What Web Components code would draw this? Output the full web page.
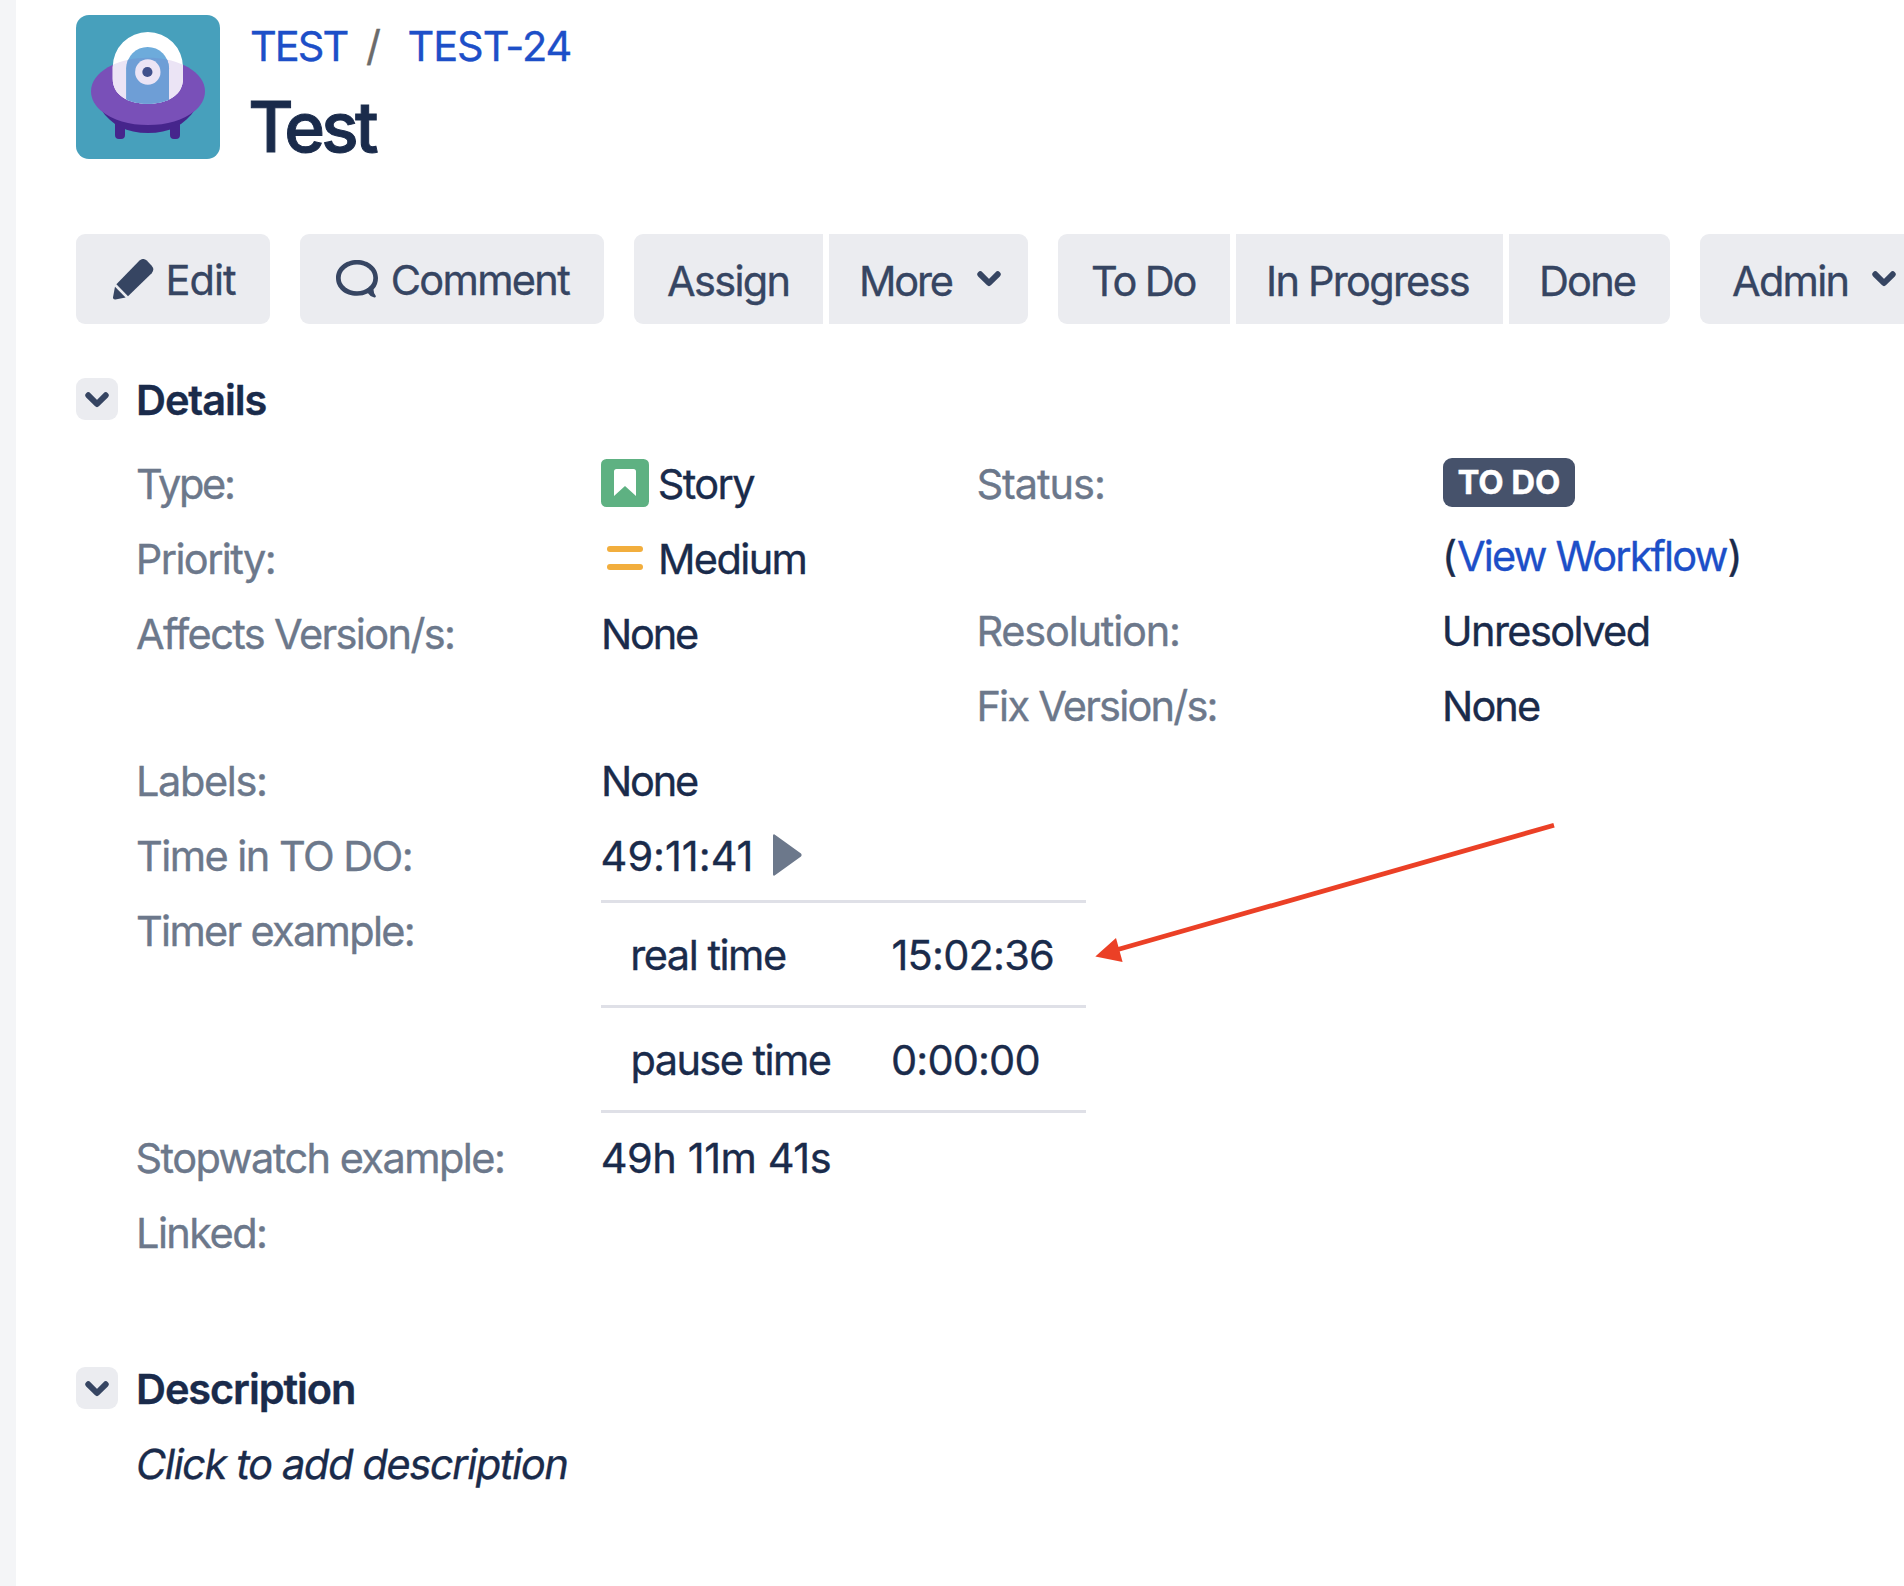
<!DOCTYPE html>
<html lang="en">
<head>
<meta charset="utf-8">
<title>TEST-24 Test</title>
<style>
html,body{margin:0;padding:0;background:#fff}
body{width:1904px;height:1586px;overflow:hidden;font-family:Inter,"Liberation Sans",sans-serif;font-size:41.5px;line-height:60px;-webkit-text-stroke:.35px currentColor;color:#1a2b4b}
</style>
</head>
<body>
<issue-page></issue-page>
<script>
const define = (name, html, ready) => {
  const t = document.createElement('template');
  t.innerHTML = html;
  customElements.define(name, class extends HTMLElement {
    constructor() { super(); this.attachShadow({mode: 'open'}).append(t.content.cloneNode(true)); }
    connectedCallback() { if (ready) ready.call(this, this.shadowRoot); }
  });
};

// Text run; ink="left width" places and tracks the visible glyphs.
const ctx = document.createElement('canvas').getContext('2d');
define('ui-run', `<style>:host{display:inline-block;white-space:nowrap;flex:none;-webkit-text-stroke-color:currentColor}:host([link]){color:#1d4fc8}</style><slot></slot>`, function () {
  const [left, width] = this.getAttribute('ink').split(' ').map(Number);
  const s = getComputedStyle(this);
  ctx.font = `${s.fontStyle} ${s.fontWeight} ${s.fontSize} ${s.fontFamily}`;
  const text = this.textContent, m = ctx.measureText(text);
  const ls = text.length > 1 ? (width - m.actualBoundingBoxLeft - m.actualBoundingBoxRight) / (text.length - 1) : 0;
  this.style.letterSpacing = ls.toFixed(3) + 'px';
  this.style.marginLeft = (left + m.actualBoundingBoxLeft).toFixed(2) + 'px';
  this.style.marginRight = (m.actualBoundingBoxRight - m.width - ls).toFixed(2) + 'px';
});

define('project-avatar', `<style>:host{display:block;width:144px;height:144px;flex:none}svg{display:block}</style>
<svg width="144" height="144" viewBox="0 0 144 144">
<defs><clipPath id="s"><path d="M15 76.300C15 57 41 42.700 72 42.700S129 57 129 76.300C129 84.500 124.500 91 119.300 95.500C107 105.500 91 110 72 110S37 105.500 24.700 95.500C19.500 91 15 84.500 15 76.300Z"/></clipPath>
<clipPath id="d"><path d="M36.700 52.200a35.150 35.150 0 0 1 70.300 0v11.500c0 15.500-14 25-35.150 25s-35.150-9.500-35.150-25z"/></clipPath></defs>
<rect width="144" height="144" rx="13" fill="#47a0bc"/>
<path d="M24.700 94C35 110 51 118 72 118s37-8 47.300-24z" fill="#46258c"/>
<path d="M39 106h10v14a4 4 0 0 1-4 4h-2a4 4 0 0 1-4-4zM94 106h10v14a4 4 0 0 1-4 4h-2a4 4 0 0 1-4-4z" fill="#46258c"/>
<g clip-path="url(#s)"><rect width="144" height="144" fill="#7950b8"/></g>
<g clip-path="url(#d)"><rect width="144" height="144" fill="#fff"/><g clip-path="url(#s)"><rect width="144" height="144" fill="#ebe4f5"/></g>
<path d="M50.300 100V53.300a21.350 21.350 0 0 1 42.700 0V100z" fill="#6dabdb"/>
<g clip-path="url(#s)"><path d="M50.300 100V53.300a21.350 21.350 0 0 1 42.700 0V100z" fill="#6e9ed6"/></g></g>
<circle cx="71.800" cy="57" r="12.700" fill="#ebe4f5"/><circle cx="71.400" cy="57" r="5.100" fill="#40508c"/>
</svg>`);

define('icon-chevron', `<style>:host{display:block;width:24px;height:16px;flex:none}svg{display:block}</style>
<svg width="24" height="16" viewBox="0 0 24 16"><path d="M3.300 3.300L12 12L20.700 3.300" fill="none" stroke="#364562" stroke-width="6" stroke-linecap="round" stroke-linejoin="round"/></svg>`);

define('icon-pencil', `<style>:host{display:block;width:41px;height:41px;flex:none}svg{display:block}</style>
<svg width="41" height="41" viewBox="0 0 41 41" fill="#364562"><path d="M26.500 1.500Q30.200-1.600 33.800 1.600L38.500 6.500Q42 10.500 38.700 14.200L15 37.200L3.400 25.200Z"/><path d="M2 27.800L12.600 38.600L2.400 40.500Q-.3 40.800 0 38.200Z"/></svg>`);

define('icon-comment', `<style>:host{display:block;width:42px;height:39px;flex:none}svg{display:block}</style>
<svg width="42" height="39" viewBox="0 0 42 39"><path d="M32 33.200Q27 35.800 21 35.800C9 35.800 0 28 0 17.900S9 0 21 0s21 7.800 21 17.900q0 7-4.500 11.700 0 4 2.200 6.200 .8 2-1.400 1.800-4-.8-6.300-4.400z" fill="#364562"/><ellipse cx="21" cy="17.900" rx="16.300" ry="13.300" fill="#ebecf0"/></svg>`);

define('icon-story', `<style>:host{display:block;width:48px;height:48px;flex:none}svg{display:block}</style>
<svg width="48" height="48" viewBox="0 0 48 48"><rect width="48" height="48" rx="5.500" fill="#5eb182"/><path d="M13 37V12.500Q13 10 15.500 10h17Q35 10 35 12.500V37L24 27z" fill="#fff"/></svg>`);

define('icon-medium', `<style>:host{display:flex;flex-direction:column;gap:12px;width:36px;flex:none}i{height:6px;border-radius:3px;background:#f2ae3d}</style><i></i><i></i>`);

define('icon-play', `<style>:host{display:block;width:29px;height:42px;flex:none}svg{display:block}</style>
<svg width="29" height="42" viewBox="0 0 29 42"><path d="M0 1.500Q.5-.6 2.300 1L28 19.600Q29.200 21 28 22.400L2.300 41Q.5 42.600 0 40.500Z" fill="#6c788b"/></svg>`);

define('tool-button', `<style>:host{display:flex;align-items:flex-start;box-sizing:border-box;height:90px;padding-top:17px;background:#ebecf0;color:#364562;flex:none;border-radius:var(--r,9px)}</style><slot></slot>`, function () {
  this.style.width = this.getAttribute('w') + 'px';
});

define('button-group', `<style>:host{display:flex;gap:6px;flex:none}::slotted(*){--r:0}::slotted(:first-child){--r:9px 0 0 9px}::slotted(:last-child){--r:0 9px 9px 0}</style><slot></slot>`);

define('section-head', `<style>:host{display:flex;align-items:flex-start;height:60px;font-weight:600}span{display:flex;box-sizing:border-box;width:42px;height:42px;padding:14px 0 0 9px;margin:8px 18px 0 0;border-radius:9px;background:#ebecf0}</style><span><icon-chevron></icon-chevron></span><slot></slot>`);

define('detail-row', `<style>:host{display:flex;align-items:flex-start}.k{width:465px;flex:none;color:#6c788b;height:60px}.v{display:flex;align-items:flex-start;min-height:60px}:host([stack]) .v{flex-direction:column}</style><div class="k"><slot name="label"></slot></div><div class="v"><slot></slot></div>`);

define('status-badge', `<style>:host{display:flex;box-sizing:border-box;width:132px;height:49px;border-radius:9px;background:#46526b;color:#fff;font-size:33px;font-weight:700;line-height:48px}</style><slot></slot>`);

define('timer-table', `<style>:host{display:block;width:485px;margin-top:-1px;border-bottom:3px solid #dfe0e7}.r{display:flex;border-top:3px solid #dfe0e7;padding:22px 0 20px 30px}.r>div{width:260px;flex:none}.r>div+div{width:auto}</style>
<div class="r"><div><ui-run ink="2.300 152.600">real time</ui-run></div><div><ui-run ink="1.500 160.500">15:02:36</ui-run></div></div>
<div class="r"><div><ui-run ink="2.400 197.300">pause time</ui-run></div><div><ui-run ink="2 145.400">0:00:00</ui-run></div></div>`);

define('issue-header', `<style>:host{display:flex;gap:30px;padding:15px 0 0 60px}.c{display:flex;margin-top:1px;color:#6b6b6b}.t{font-size:69.500px;line-height:85px;font-weight:500;-webkit-text-stroke-width:1px;margin-top:9px}</style>
<project-avatar></project-avatar><div><div class="c"><ui-run link ink="1 96.500">TEST</ui-run><ui-run ink="18.500 12">/</ui-run><ui-run link ink="27.500 162">TEST-24</ui-run></div><div class="t"><ui-run ink="1.200 126.800">Test</ui-run></div></div>`);

define('issue-toolbar', `<style>:host{display:flex;gap:30px;padding-left:60px}icon-pencil{margin:8px 0 0 37px}icon-comment{margin:9px 0 0 36px}icon-chevron{margin:20px 0 0 24.500px}ui-run.i{margin-top:-1px}</style>
<tool-button w="194"><icon-pencil></icon-pencil><ui-run class="i" ink="14.500 67.500">Edit</ui-run></tool-button>
<tool-button w="304"><icon-comment></icon-comment><ui-run class="i" ink="14.700 177.500">Comment</ui-run></tool-button>
<button-group><tool-button w="189"><ui-run ink="34 120.600">Assign</ui-run></tool-button><tool-button w="199"><ui-run ink="33 90.700">More</ui-run><icon-chevron></icon-chevron></tool-button></button-group>
<button-group><tool-button w="172"><ui-run ink="34 103.500">To Do</ui-run></tool-button><tool-button w="267"><ui-run ink="33 199.700">In Progress</ui-run></tool-button><tool-button w="161"><ui-run ink="33 93.800">Done</ui-run></tool-button></button-group>
<tool-button w="234"><ui-run ink="33 114.500">Admin</ui-run><icon-chevron></icon-chevron></tool-button>`);

define('issue-details', `<style>:host{display:block;padding-left:120px}.two{display:flex;height:282px}.col{display:flex;flex-direction:column;gap:15px;width:841px;flex:none}.rest{display:flex;flex-direction:column;gap:15px;margin-top:15px}.w{display:flex;margin-top:19px}icon-story{margin-top:5px}icon-medium{margin:17px 0 0 6px}icon-play{margin:8px 0 0 22.500px}status-badge{margin:4px 0 0 1px}</style>
<div class="two"><div class="col">
<detail-row><ui-run slot="label" ink="1 96">Type:</ui-run><icon-story></icon-story><ui-run ink="10.700 95.500">Story</ui-run></detail-row>
<detail-row><ui-run slot="label" ink="2.800 135">Priority:</ui-run><icon-medium></icon-medium><ui-run ink="18 144.600">Medium</ui-run></detail-row>
<detail-row><ui-run slot="label" ink="1 316">Affects Version/s:</ui-run><ui-run ink="3 94">None</ui-run></detail-row>
</div><div class="col">
<detail-row stack style="height:132px"><ui-run slot="label" ink="1.400 124.600">Status:</ui-run><status-badge><ui-run ink="15.500 100.500">TO DO</ui-run></status-badge><div class="w"><ui-run ink="4 8">(</ui-run><ui-run link ink="2 269.500">View Workflow</ui-run><ui-run ink="1 8">)</ui-run></div></detail-row>
<detail-row><ui-run slot="label" ink="2.400 198.600">Resolution:</ui-run><ui-run ink="2.700 204">Unresolved</ui-run></detail-row>
<detail-row><ui-run slot="label" ink="2.400 236.200">Fix Version/s:</ui-run><ui-run ink="3 95">None</ui-run></detail-row>
</div></div>
<div class="rest">
<detail-row><ui-run slot="label" ink="3 126">Labels:</ui-run><ui-run ink="3 94">None</ui-run></detail-row>
<detail-row><ui-run slot="label" ink="1 273.800">Time in TO DO:</ui-run><ui-run ink="1.600 148">49:11:41</ui-run><icon-play></icon-play></detail-row>
<detail-row><ui-run slot="label" ink="1 275.800">Timer example:</ui-run><timer-table></timer-table></detail-row>
<detail-row><ui-run slot="label" ink="1.500 365.500">Stopwatch example:</ui-run><ui-run ink="1.700 227">49h 11m 41s</ui-run></detail-row>
<detail-row><ui-run slot="label" ink="3 126">Linked:</ui-run></detail-row>
</div>`);

define('pointer-arrow', `<style>:host{position:absolute;left:1094px;top:820px;width:462px;height:146px}svg{display:block}</style>
<svg width="462" height="146" viewBox="1094 820 462 146"><path d="M1554 825.200L1117 949.800" stroke="#eb4026" stroke-width="4.800"/><path d="M1095.300 956.500L1116 938L1122.600 962z" fill="#eb4026"/></svg>`);

define('issue-page', `<style>:host{display:block;position:relative;box-sizing:border-box;width:1904px;height:1586px;overflow:hidden;border-left:16px solid #f4f5f7;background:#fff}issue-header{height:234px;box-sizing:border-box}section-head{padding-left:60px}pointer-arrow{margin-left:-16px}.d{padding-left:120px}.d ui-run{transform:skewX(-9.500deg);transform-origin:0 45px}</style>
<issue-header></issue-header><issue-toolbar></issue-toolbar>
<section-head style="margin-top:46px"><ui-run ink="3 127.500">Details</ui-run></section-head>
<issue-details style="margin-top:24px"></issue-details>
<section-head style="margin-top:96px"><ui-run ink="3 215">Description</ui-run></section-head>
<div class="d" style="margin-top:15px"><ui-run ink="0 428.500">Click to add description</ui-run></div>
<pointer-arrow></pointer-arrow>`);
</script>
</body>
</html>
